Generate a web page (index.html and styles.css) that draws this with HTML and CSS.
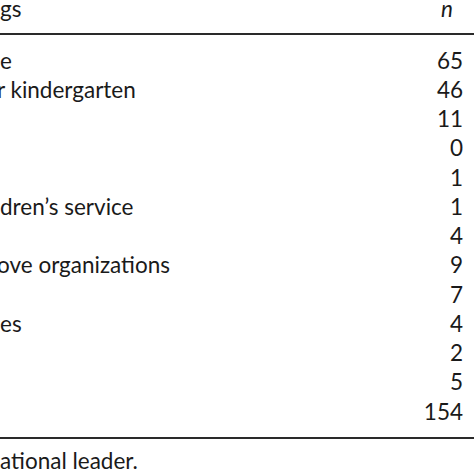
FILE: index.html
```html
<!DOCTYPE html>
<html>
<head>
<meta charset="utf-8">
<link rel="stylesheet" href="styles.css">
</head>
<body>
<div class="table">
  <div class="head">
    <span class="label">gs</span>
    <span class="num"><i>n</i></span>
  </div>
  <div class="body">
    <div class="row"><span class="label">e</span><span class="num">65</span></div>
    <div class="row"><span class="label cut">r kindergarten</span><span class="num">46</span></div>
    <div class="row"><span class="label"></span><span class="num">11</span></div>
    <div class="row"><span class="label"></span><span class="num">0</span></div>
    <div class="row"><span class="label"></span><span class="num">1</span></div>
    <div class="row"><span class="label">dren’s service</span><span class="num">1</span></div>
    <div class="row"><span class="label"></span><span class="num">4</span></div>
    <div class="row"><span class="label cut">ove organizations</span><span class="num">9</span></div>
    <div class="row"><span class="label"></span><span class="num">7</span></div>
    <div class="row"><span class="label">es</span><span class="num">4</span></div>
    <div class="row"><span class="label"></span><span class="num">2</span></div>
    <div class="row"><span class="label"></span><span class="num">5</span></div>
    <div class="row"><span class="label"></span><span class="num">154</span></div>
  </div>
  <div class="foot">ational leader.</div>
</div>
</body>
</html>
```

FILE: styles.css
```css
html, body {
  margin: 0;
  padding: 0;
  background: #ffffff;
}
body {
  width: 474px;
  height: 474px;
  overflow: hidden;
  font-family: Lato, "Open Sans", sans-serif;
  font-size: 22.5px;
  color: #1a1a1a;
}
.table {
  width: 474px;
}
.head {
  display: flex;
  justify-content: space-between;
  align-items: flex-start;
  height: 33px;
  line-height: 17px;
  border-bottom: 2px solid #2a2a2a;
}
.head .num {
  padding-right: 21px;
}
.body {
  padding-top: 10.7px;
  padding-bottom: 11px;
  border-bottom: 2px solid #2a2a2a;
}
.row {
  display: flex;
  justify-content: space-between;
  height: 29.25px;
  line-height: 29.25px;
}
.label {
  white-space: nowrap;
}
.cut {
  margin-left: -3px;
}
.num {
  padding-right: 11px;
  text-align: right;
}
.foot {
  padding-top: 6.8px;
  line-height: 29px;
  white-space: nowrap;
}
```
